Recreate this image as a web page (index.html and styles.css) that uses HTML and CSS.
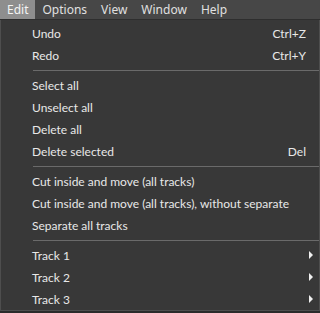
FILE: index.html
```html
<!DOCTYPE html>
<html>
	<head>
		<meta charset="UTF-8">
		<title>Edit menu</title>
		<link rel="stylesheet" href="styles.css">
	</head>
	<body>
		<ul class="menubar">
			<li class="title active">Edit</li>
			<li class="title">Options</li>
			<li class="title">View</li>
			<li class="title">Window</li>
			<li class="title">Help</li>
		</ul>
		<ul class="popup">
			<li class="item"><span class="label">Undo</span><span class="key">Ctrl+Z</span></li>
			<li class="item"><span class="label">Redo</span><span class="key">Ctrl+Y</span></li>
			<li class="sep"></li>
			<li class="item"><span class="label">Select all</span></li>
			<li class="item"><span class="label">Unselect all</span></li>
			<li class="item"><span class="label">Delete all</span></li>
			<li class="item"><span class="label">Delete selected</span><span class="key">Del</span></li>
			<li class="sep"></li>
			<li class="item"><span class="label">Cut inside and move (all tracks)</span></li>
			<li class="item"><span class="label">Cut inside and move (all tracks), without separate</span></li>
			<li class="item"><span class="label">Separate all tracks</span></li>
			<li class="sep"></li>
			<li class="item sub"><span class="label">Track 1</span><span class="arrow"></span></li>
			<li class="item sub"><span class="label">Track 2</span><span class="arrow"></span></li>
			<li class="item sub"><span class="label">Track 3</span><span class="arrow"></span></li>
		</ul>
	</body>
</html>
```

FILE: styles.css
```css
*{
	margin: 0;
	padding: 0;
	box-sizing: border-box;
}
ul{
	list-style: none;
}
body{
	width: 320px;
	height: 313px;
	background-color: #2b2b2b;
	font-family: "Noto Sans", "Open Sans", sans-serif;
	font-size: 12px;
	color: #e8e8e8;
	overflow: hidden;
}

/*菜单栏*/
.menubar{
	display: flex;
	height: 20px;
	background-color: #474747;
	border-bottom: 1px solid #2e2e2e;
}
.menubar .title{
	padding: 0 7px;
	line-height: 19px;
	color: #e0e0e0;
}
.menubar .title.active{
	background-color: #8e8e8e;
	color: #f4f4f4;
}

/*弹出菜单*/
.popup{
	height: 291px;
	background-color: #383838;
	border: 1px solid #4e4e4e;
	border-top: none;
	padding-top: 2px;
	font-family: "Lato", "Noto Sans", sans-serif;
	font-size: 12px;
}
.popup .item{
	display: flex;
	align-items: center;
	height: 22px;
	padding-left: 31px;
	padding-right: 13px;
	white-space: nowrap;
}
.popup .item .label{
	flex: 1;
}
.popup .item.sub{
	padding-right: 6px;
}
.popup .arrow{
	width: 0;
	height: 0;
	border-top: 4px solid transparent;
	border-bottom: 4px solid transparent;
	border-left: 4px solid #f0f0f0;
}
.popup .sep{
	height: 8px;
	margin-left: 32px;
	padding-top: 4px;
}
.popup .sep::after{
	content: "";
	display: block;
	height: 1px;
	background-color: #6a6a6a;
}
```
